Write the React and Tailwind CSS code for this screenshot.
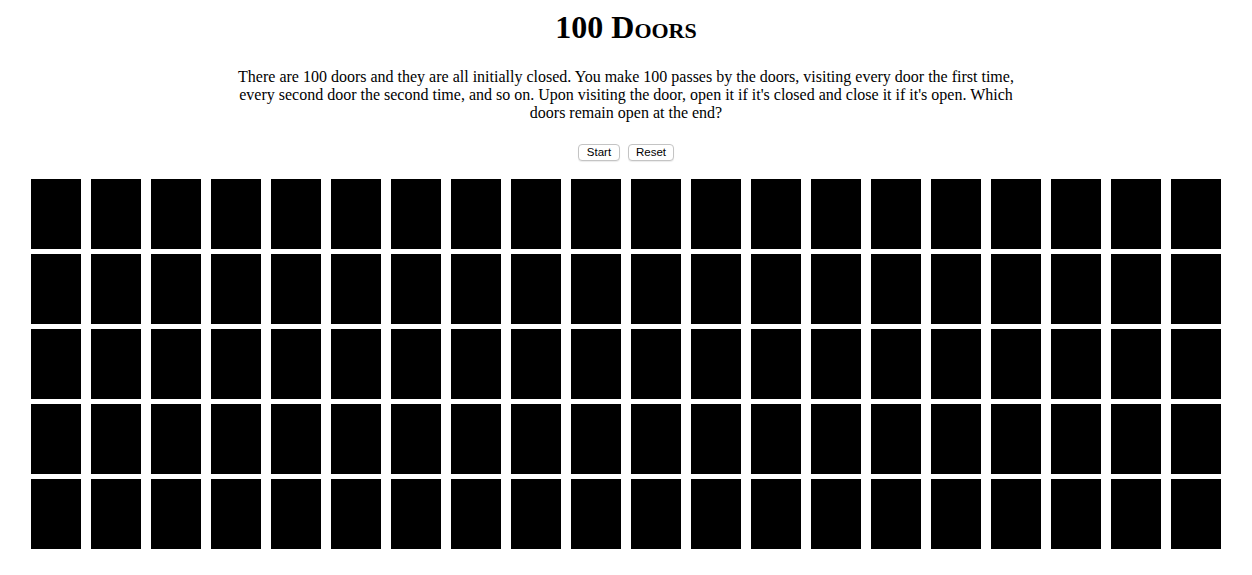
import { useState } from "react";

const serif = { fontFamily: '"Liberation Serif", "Times New Roman", serif' };

export default function App() {
  const [open, setOpen] = useState(() => Array(100).fill(false));

  // Toggle every door once per pass; only perfect squares stay open.
  function start() {
    const doors = Array(100).fill(false);
    for (let pass = 1; pass <= 100; pass++) {
      for (let i = pass - 1; i < 100; i += pass) doors[i] = !doors[i];
    }
    setOpen(doors);
  }

  function reset() {
    setOpen(Array(100).fill(false));
  }

  return (
    <div className="min-h-screen bg-white pt-[9px] text-black" style={serif}>
      <h1 className="text-center text-[32px] font-bold leading-[37px] [font-variant:small-caps]">
        100 Doors
      </h1>

      <p className="mx-auto mt-[22px] max-w-[800px] text-center text-[16px] leading-[18px]">
        There are 100 doors and they are all initially closed. You make 100 passes by the doors,
        visiting every door the first time, every second door the second time, and so on. Upon
        visiting the door, open it if it's closed and close it if it's open. Which doors remain open
        at the end?
      </p>

      <div
        className="mt-[22px] flex justify-center gap-2"
        style={{ fontFamily: '"Liberation Sans", Arial, sans-serif' }}
      >
        <button
          type="button"
          onClick={start}
          className="h-[17px] w-[42px] rounded-[4px] border border-[#c4c4c4] bg-white text-[11.5px] leading-[15px] shadow-[0_1px_1px_rgba(0,0,0,0.08)]"
        >
          Start
        </button>
        <button
          type="button"
          onClick={reset}
          className="h-[17px] w-[46px] rounded-[4px] border border-[#c4c4c4] bg-white text-[11.5px] leading-[15px] shadow-[0_1px_1px_rgba(0,0,0,0.08)]"
        >
          Reset
        </button>
      </div>

      <div className="mx-auto mt-[18px] flex w-[1190px] flex-wrap gap-x-[10px] gap-y-[5px]">
        {open.map((isOpen, i) => (
          <div
            key={i}
            className={isOpen ? "h-[70px] w-[50px] bg-[#e5e5e5]" : "h-[70px] w-[50px] bg-black"}
          />
        ))}
      </div>
    </div>
  );
}
